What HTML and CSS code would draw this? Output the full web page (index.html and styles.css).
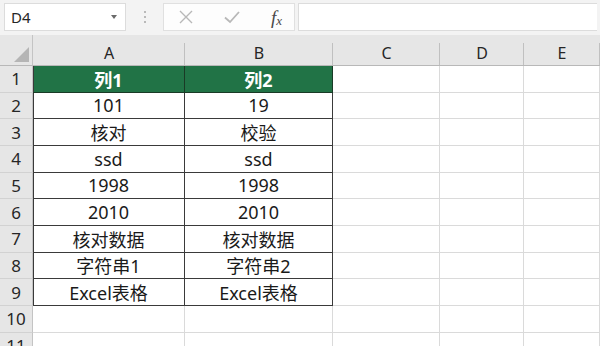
FILE: index.html
```html
<!DOCTYPE html>
<html>
<head>
<meta charset="utf-8">
<link rel="stylesheet" href="styles.css">
</head>
<body>
<div class="app">
  <div class="toolbar">
    <div class="namebox"><span class="ref">D4</span><span class="caret"></span></div>
    <div class="sep"><span></span><span></span><span></span></div>
    <div class="fbtns">
      <svg class="ico" width="16" height="16" viewBox="0 0 16 16"><path d="M2 2 L14 14 M14 2 L2 14" stroke="#b8b8b8" stroke-width="1.4" fill="none"/></svg>
      <svg class="ico" width="18" height="16" viewBox="0 0 18 16"><path d="M2 8.5 L7 13 L16 3" stroke="#b8b8b8" stroke-width="1.8" fill="none"/></svg>
      <span class="fx">f<sub>x</sub></span>
    </div>
    <div class="formula"></div>
  </div>
  <div class="grid">
    <div class="corner"><span class="tri"></span></div>
    <div class="ch">A</div><div class="ch">B</div><div class="ch">C</div><div class="ch">D</div><div class="ch last">E</div>

    <div class="rh">1</div><div class="c t h">列1</div><div class="c t h">列2</div><div class="c"></div><div class="c"></div><div class="c"></div>
    <div class="rh">2</div><div class="c t">101</div><div class="c t">19</div><div class="c"></div><div class="c"></div><div class="c"></div>
    <div class="rh">3</div><div class="c t">核对</div><div class="c t">校验</div><div class="c"></div><div class="c"></div><div class="c"></div>
    <div class="rh">4</div><div class="c t">ssd</div><div class="c t">ssd</div><div class="c"></div><div class="c"></div><div class="c"></div>
    <div class="rh">5</div><div class="c t">1998</div><div class="c t">1998</div><div class="c"></div><div class="c"></div><div class="c"></div>
    <div class="rh">6</div><div class="c t">2010</div><div class="c t">2010</div><div class="c"></div><div class="c"></div><div class="c"></div>
    <div class="rh">7</div><div class="c t">核对数据</div><div class="c t">核对数据</div><div class="c"></div><div class="c"></div><div class="c"></div>
    <div class="rh">8</div><div class="c t">字符串1</div><div class="c t">字符串2</div><div class="c"></div><div class="c"></div><div class="c"></div>
    <div class="rh">9</div><div class="c t">Excel表格</div><div class="c t">Excel表格</div><div class="c"></div><div class="c"></div><div class="c"></div>
    <div class="rh">10</div><div class="c"></div><div class="c"></div><div class="c"></div><div class="c"></div><div class="c"></div>
    <div class="rh">11</div><div class="c"></div><div class="c"></div><div class="c"></div><div class="c"></div><div class="c"></div>
  </div>
</div>
</body>
</html>
```
FILE: styles.css
```css
* { box-sizing: border-box; }
html, body { margin: 0; padding: 0; }
body {
  width: 600px;
  height: 346px;
  overflow: hidden;
  background: #ffffff;
  font-family: "Noto Sans", "Noto Sans CJK SC", sans-serif;
}
.app { width: 600px; height: 346px; overflow: hidden; }

.toolbar {
  display: flex;
  align-items: stretch;
  height: 35px;
  padding: 3px 3px 4px 4px;
  background: #f3f3f3;
}
.namebox {
  width: 122px;
  background: #ffffff;
  border: 1px solid #dcdcdc;
  display: flex;
  align-items: center;
  justify-content: space-between;
  padding: 0 8px 0 6px;
}
.ref {
  font-family: "Noto Sans", "Liberation Sans", sans-serif;
  font-size: 15px;
  color: #262626;
}
.caret {
  width: 0; height: 0;
  border-left: 3.5px solid transparent;
  border-right: 3.5px solid transparent;
  border-top: 4px solid #6a6a6a;
}
.sep {
  width: 37px;
  display: flex;
  flex-direction: column;
  align-items: center;
  justify-content: center;
  gap: 3px;
}
.sep span { width: 2px; height: 2px; background: #a6a6a6; border-radius: 1px; }
.fbtns {
  width: 132px;
  background: #fdfdfd;
  border: 1px solid #e0e0e0;
  display: flex;
  align-items: center;
  justify-content: space-between;
  padding: 0 12px 0 14px;
}
.fx {
  font-family: "Liberation Serif", "DejaVu Serif", serif;
  font-style: italic;
  font-size: 19px;
  color: #4a4a4a;
  line-height: 1;
}
.fx sub { font-size: 13px; vertical-align: -1px; }
.formula {
  flex: 1;
  margin-left: 3px;
  background: #ffffff;
  border: 1px solid #dcdcdc;
  border-right: none;
}

.grid {
  display: grid;
  grid-template-columns: 33px 152px 148px 107px 84px 76px;
  grid-template-rows: 31px repeat(11, 26.67px);
  background: #ffffff;
}
.corner {
  background: #e6e6e6;
  border-right: 1px solid #c4c4c4;
  border-bottom: 1px solid #b8b8b8;
  position: relative;
}
.tri {
  position: absolute;
  right: 3px;
  bottom: 3px;
  width: 0; height: 0;
  border-left: 15px solid transparent;
  border-bottom: 15px solid #b5b5b5;
}
.ch {
  background: #e6e6e6;
  border-bottom: 1px solid #b8b8b8;
  position: relative;
  display: flex;
  align-items: flex-end;
  justify-content: center;
  padding-bottom: 1px;
  font-family: "Noto Sans", "Liberation Sans", sans-serif;
  font-size: 16px;
  color: #262626;
}
.ch::after {
  content: "";
  position: absolute;
  right: 0;
  top: 8px;
  bottom: 0;
  width: 1px;
  background: #c0c0c0;
}
.rh {
  background: #e6e6e6;
  border-right: 1px solid #c4c4c4;
  border-bottom: 1px solid #d2d2d2;
  display: flex;
  align-items: center;
  justify-content: center;
  font-family: "Noto Sans", "Liberation Sans", sans-serif;
  font-size: 17px;
  color: #262626;
}
.c {
  border-right: 1px solid #dadada;
  border-bottom: 1px solid #dadada;
  display: flex;
  align-items: center;
  justify-content: center;
  font-family: "Noto Sans", "Noto Sans CJK SC", sans-serif;
  font-size: 18px;
  color: #1a1a1a;
  white-space: nowrap;
}
.c.t {
  border-right-color: #3a3a3a;
  border-bottom-color: #3a3a3a;
}
.grid > .rh + .c.t { box-shadow: inset 1px 0 0 #3a3a3a; }
.c.h {
  background: #217346;
  color: #ffffff;
  font-weight: 700;
  border-right-color: #1a3a26;
  border-bottom-color: #1a3a26;
}
```
